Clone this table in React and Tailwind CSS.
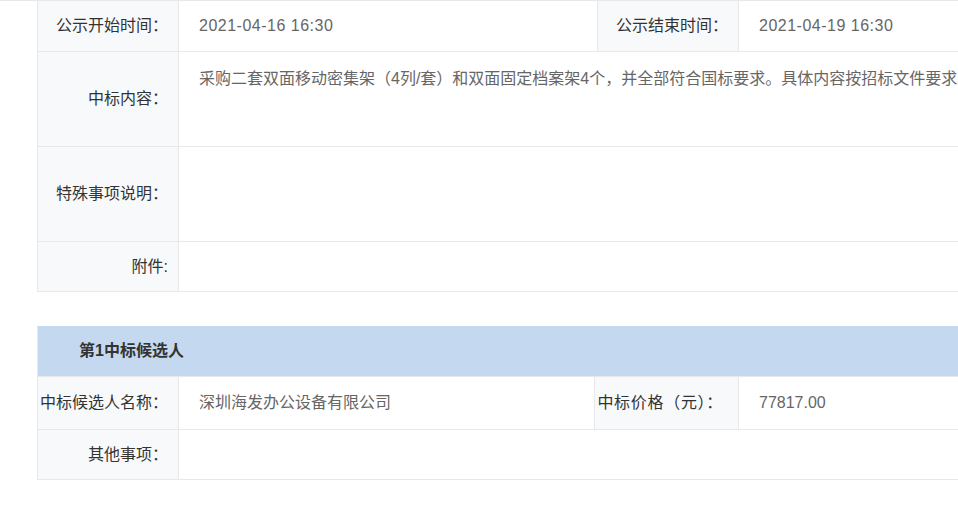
import React from 'react';

const font = { fontFamily: '"Liberation Sans", "Noto Sans CJK SC", sans-serif' };

const Label = ({ children, className = '' }) => (
  <div className={`flex items-center justify-end pr-[10px] bg-[#f8f9fb] border-r border-[#e8e8e8] text-[#333] whitespace-nowrap ${className}`}>
    {children}
  </div>
);

const Value = ({ children, className = '' }) => (
  <div className={`flex items-center pl-[20px] text-[#666] whitespace-nowrap ${className}`}>
    {children}
  </div>
);

const App = () => {
  return (
    <div className="w-[958px] h-[510px] overflow-hidden bg-white text-[16px]" style={font}>
      <div className="border-t border-[#e8e8e8] pl-[37px]">
        {/* 公示信息 */}
        <div className="w-[1120px] border-l border-[#e8e8e8]">
          <div className="flex h-[51px] border-b border-[#e8e8e8]">
            <Label className="w-[141px]">公示开始时间：</Label>
            <Value className="w-[419px] border-r border-[#e8e8e8] tracking-[0.5px]">2021-04-16 16:30</Value>
            <Label className="w-[141px]">公示结束时间：</Label>
            <Value className="flex-1 tracking-[0.5px]">2021-04-19 16:30</Value>
          </div>
          <div className="flex h-[95px] border-b border-[#e8e8e8]">
            <Label className="w-[141px]">中标内容：</Label>
            <div className="flex-1 pl-[20px] pt-[15px] leading-[24px] text-[#666] whitespace-nowrap overflow-hidden">
              采购二套双面移动密集架（4列/套）和双面固定档案架4个，并全部符合国标要求。具体内容按招标文件要求。
            </div>
          </div>
          <div className="flex h-[95px] border-b border-[#e8e8e8]">
            <Label className="w-[141px]">特殊事项说明：</Label>
            <Value className="flex-1" />
          </div>
          <div className="flex h-[50px] border-b border-[#e8e8e8]">
            <Label className="w-[141px]">附件:</Label>
            <Value className="flex-1" />
          </div>
        </div>

        {/* 中标候选人 */}
        <div className="w-[1120px] mt-[34px] border-l border-[#e8e8e8]">
          <div className="flex items-center h-[51px] pl-[41px] bg-[#c4d9f0] border-b border-[#e8e8e8] font-bold text-[#333]">
            第1中标候选人
          </div>
          <div className="flex h-[53px] border-b border-[#e8e8e8]">
            <Label className="w-[141px]">中标候选人名称：</Label>
            <Value className="w-[416px] border-r border-[#e8e8e8]">深圳海发办公设备有限公司</Value>
            <Label className="w-[144px] !pr-[15px] tracking-[0.7px]">中标价格（元）：</Label>
            <Value className="flex-1">77817.00</Value>
          </div>
          <div className="flex h-[50px] border-b border-[#e8e8e8]">
            <Label className="w-[141px]">其他事项：</Label>
            <Value className="flex-1" />
          </div>
        </div>
      </div>
    </div>
  );
};

export default App;
